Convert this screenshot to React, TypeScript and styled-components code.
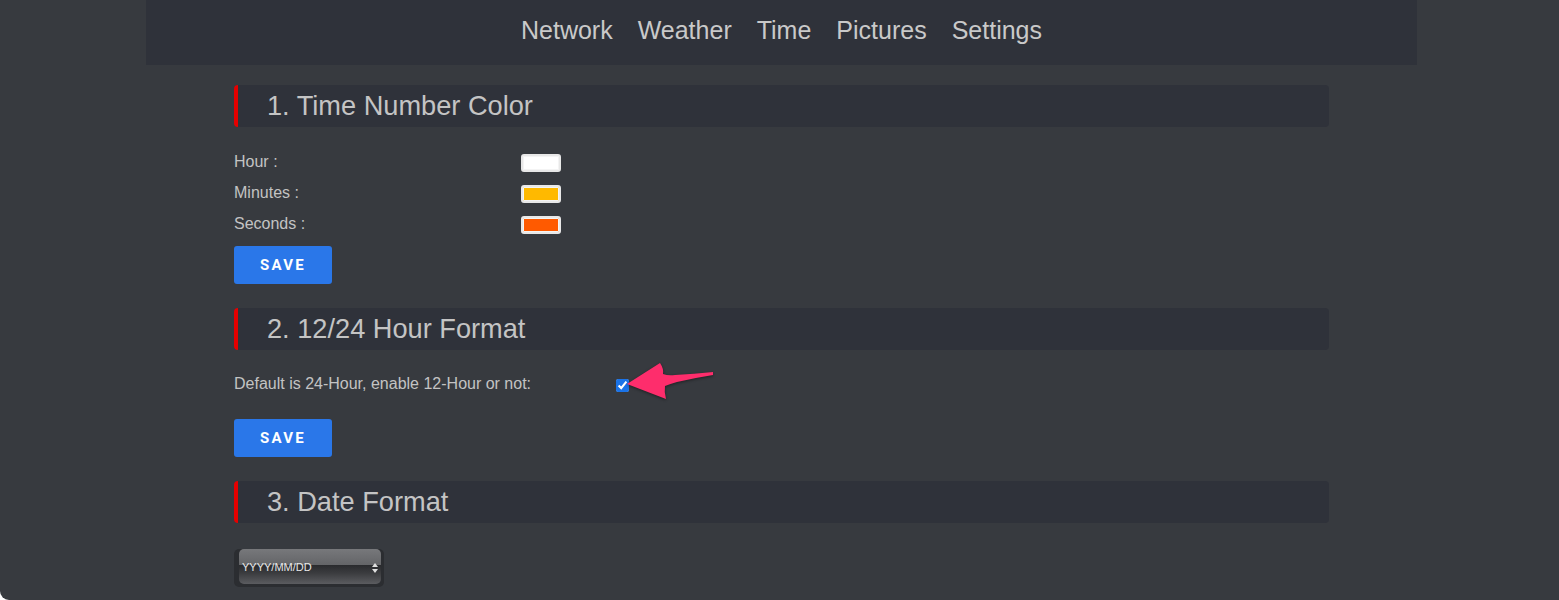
import React from "react";
import styled, { createGlobalStyle } from "styled-components";

const Global = createGlobalStyle`
  html, body { margin: 0; padding: 0; background: #ffffff; }
  body { font-family: "Liberation Sans", Arial, sans-serif; }
  * { box-sizing: border-box; }
`;

const Page = styled.div`
  width: 1559px;
  height: 600px;
  background: #373a3f;
  border-bottom-left-radius: 9px;
  overflow: hidden;
  padding-left: 146px;
`;

const Frame = styled.div`
  width: 1271px;
`;

const Nav = styled.nav`
  height: 65px;
  background: #2f323a;
  display: flex;
  justify-content: center;
  align-items: flex-start;
  padding-top: 15px;
  gap: 25px;
`;

const NavItem = styled.a`
  font-family: "Liberation Sans", Arial, sans-serif;
  font-size: 25px;
  line-height: 31px;
  color: #c9c9c9;
  text-decoration: none;
`;

const Content = styled.main`
  padding: 20px 88px 0;
  display: flex;
  flex-direction: column;
`;

const SectionHeader = styled.h2<{ $gapTop?: number }>`
  margin: ${(p) => p.$gapTop ?? 0}px 0 0;
  height: 42px;
  background: #2f323a;
  border-left: 4px solid #e60000;
  border-radius: 4px;
  padding-left: 29px;
  display: flex;
  align-items: center;
  font-family: "Liberation Sans", Arial, sans-serif;
  font-weight: 400;
  font-size: 27.2px;
  color: #c4c4c4;
`;

const Rows = styled.div`
  margin-top: 20px;
  display: flex;
  flex-direction: column;
`;

const Row = styled.div<{ $h?: number }>`
  height: ${(p) => p.$h ?? 31}px;
  display: flex;
  align-items: center;
`;

const Label = styled.span<{ $w: number }>`
  width: ${(p) => p.$w}px;
  font-size: 16px;
  color: #c3c3c3;
  margin-top: -1px;
`;

const CheckLabel = styled.span`
  width: 378px;
  font-size: 16px;
  color: #c3c3c3;
  margin-top: -3px;
`;

const Swatch = styled.span<{ $color: string }>`
  width: 40px;
  height: 18px;
  border-radius: 3px;
  border: 2px solid #e8e8e8;
  background: ${(p) => p.$color};
  box-shadow: inset 0 0 0 1px #f4f4f4;
`;

const SaveButton = styled.button<{ $top: number }>`
  margin-top: ${(p) => p.$top}px;
  width: 98px;
  height: 38px;
  border: none;
  border-radius: 3px;
  background: #2a77e9;
  color: #ffffff;
  font-family: Roboto, "Liberation Sans", sans-serif;
  font-weight: 700;
  font-size: 15px;
  letter-spacing: 2.2px;
  padding: 0;
`;

const CheckWrap = styled.span`
  position: relative;
  display: inline-flex;
  align-items: center;
`;

const Check = styled.input`
  width: 13px;
  height: 13px;
  margin: 0 0 0 4px;
  accent-color: #1a73e8;
`;

const Pointer = styled.svg`
  position: absolute;
  left: 12px;
  top: -20px;
  filter: drop-shadow(0 1px 1.5px rgba(0, 0, 0, 0.45));
`;

const SelectWrap = styled.div`
  position: relative;
  margin-top: 26px;
  width: 150px;
  height: 38px;
  border-radius: 5px;
  background: #2b2d31;
  padding: 0 3px 3px 5px;
`;

const Select = styled.select`
  appearance: none;
  -webkit-appearance: none;
  width: 100%;
  height: 100%;
  border: none;
  border-radius: 5px;
  color: #e8e8e8;
  font-family: "Liberation Sans", Arial, sans-serif;
  font-size: 11px;
  padding: 0 0 0 3px;
  background: linear-gradient(
    to bottom,
    #77787b 0%,
    #646568 45%,
    #2a2b2e 47%,
    #3c3d40 70%,
    #5b5c60 100%
  );
  outline: none;
`;

const SelectArrows = styled.svg`
  position: absolute;
  right: 6px;
  top: 14px;
  pointer-events: none;
`;

const Save = ({ top }: { top: number }) => <SaveButton $top={top}>SAVE</SaveButton>;

export default function App() {
  return (
    <>
      <Global />
      <Page>
        <Frame>
          <Nav>
            {["Network", "Weather", "Time", "Pictures", "Settings"].map((n) => (
              <NavItem key={n} href="#">
                {n}
              </NavItem>
            ))}
          </Nav>
          <Content>
            <SectionHeader>1. Time Number Color</SectionHeader>
            <Rows>
              <Row>
                <Label $w={287}>Hour :</Label>
                <Swatch $color="#ffffff" />
              </Row>
              <Row>
                <Label $w={287}>Minutes :</Label>
                <Swatch $color="#ffb900" />
              </Row>
              <Row>
                <Label $w={287}>Seconds :</Label>
                <Swatch $color="#ff5a00" />
              </Row>
            </Rows>
            <Save top={6} />

            <SectionHeader $gapTop={24}>2. 12/24 Hour Format</SectionHeader>
            <Rows>
              <Row $h={30}>
                <CheckLabel>Default is 24-Hour, enable 12-Hour or not:</CheckLabel>
                <CheckWrap>
                  <Check type="checkbox" defaultChecked />
                  <Pointer width="92" height="44" viewBox="0 0 92 44">
                    <path
                      d="M3 25 L36 4 Q40 10 39 15 Q44 17 51 16 Q70 15 89 13 L89 16 Q70 19 53 23 Q46 25 41 27 Q40 33 42 40 Z"
                      fill="#fe2d6c"
                    />
                  </Pointer>
                </CheckWrap>
              </Row>
            </Rows>
            <Save top={19} />

            <SectionHeader $gapTop={24}>3. Date Format</SectionHeader>
            <SelectWrap>
              <Select defaultValue="YYYY/MM/DD">
                <option>YYYY/MM/DD</option>
                <option>MM/DD/YYYY</option>
                <option>DD/MM/YYYY</option>
              </Select>
              <SelectArrows width="6" height="10" viewBox="0 0 6 10">
                <path d="M3 0 L6 4 L0 4 Z M3 10 L6 6 L0 6 Z" fill="#e0e0e0" />
              </SelectArrows>
            </SelectWrap>
          </Content>
        </Frame>
      </Page>
    </>
  );
}
